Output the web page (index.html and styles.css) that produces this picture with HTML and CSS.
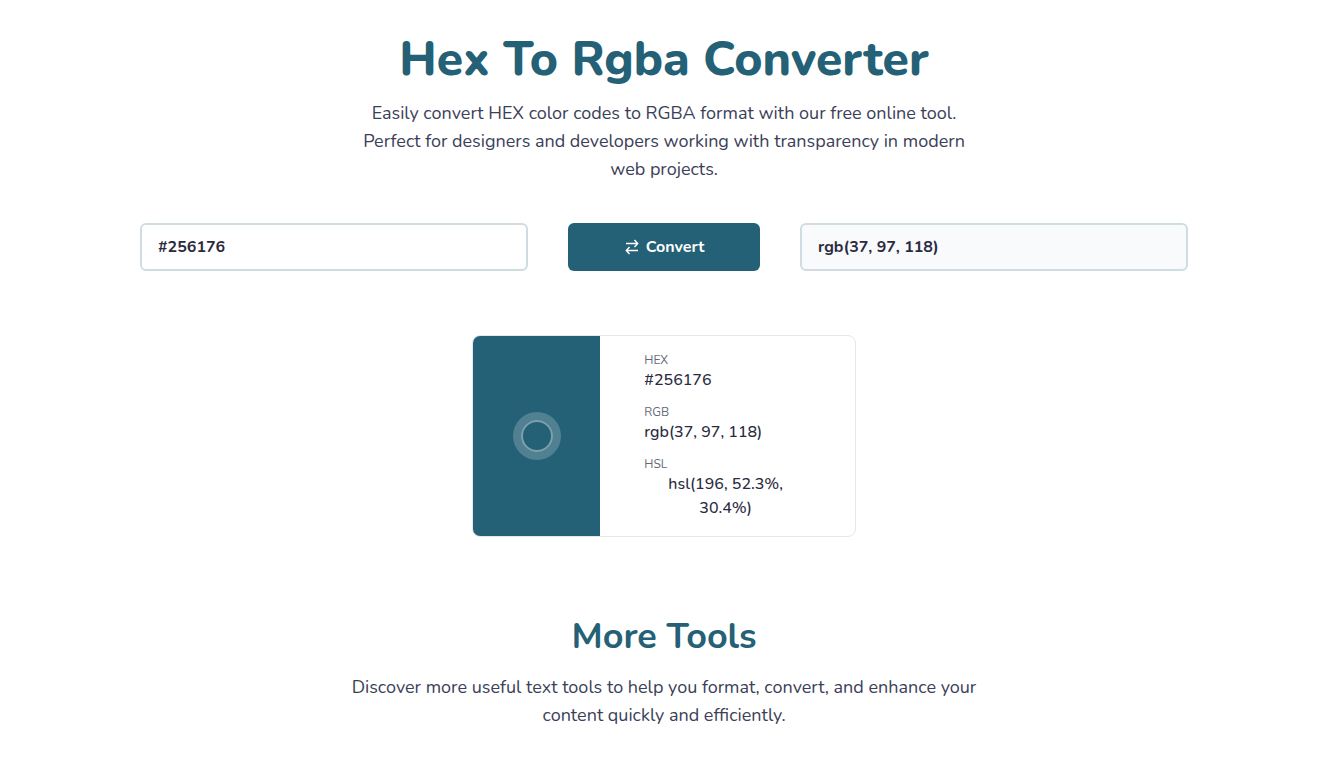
FILE: index.html
```html
<!DOCTYPE html>
<html lang="en">
<head>
    <meta charset="UTF-8">
    <meta name="viewport" content="width=device-width, initial-scale=1.0">
    <title>Hex To Rgba Converter</title>
    <link rel="stylesheet" href="styles.css">
</head>
<body>

<main class="container">
    <header class="intro">
        <h1>Hex To Rgba Converter</h1>
        <p class="lead">Easily convert HEX color codes to RGBA format with our free online tool. Perfect for designers and developers working with transparency in modern web projects.</p>
    </header>

    <form id="convertForm" class="converter">
        <input type="text" id="hexInput" class="field" value="#256176" aria-label="HEX color">
        <button type="submit" class="convert-btn">
            <svg class="icon" viewBox="0 0 16 16" aria-hidden="true">
                <path d="M2 4.5h11.5M10.5 1l3.2 3.5-3.2 3.5M14 11.5H2.5M5.5 8l-3.2 3.5 3.2 3.5"/>
            </svg>
            Convert
        </button>
        <input type="text" id="rgbOutput" class="field output" value="rgb(37, 97, 118)" aria-label="RGBA color" readonly>
    </form>

    <section class="card">
        <div class="swatch"><span class="dot"></span></div>
        <dl class="values">
            <dt>HEX</dt>
            <dd>#256176</dd>
            <dt>RGB</dt>
            <dd>rgb(37, 97, 118)</dd>
            <dt>HSL</dt>
            <dd>hsl(196, 52.3%, 30.4%)</dd>
        </dl>
    </section>

    <section class="more">
        <h2>More Tools</h2>
        <p class="lead">Discover more useful text tools to help you format, convert, and enhance your content quickly and efficiently.</p>
    </section>
</main>

<script>
    const convertForm = document.getElementById('convertForm');
    convertForm.addEventListener('submit', (e) => {
        e.preventDefault();

        const hex = document.getElementById('hexInput').value.replace('#', '');
        const num = parseInt(hex, 16);

        // Only plain 6 digit codes are supported
        if (hex.length !== 6 || isNaN(num)) {
            return;
        }

        document.getElementById('rgbOutput').value = `rgb(${num >> 16}, ${(num >> 8) & 255}, ${num & 255})`;
    });
</script>

</body>
</html>
```
FILE: styles.css
```css
* {
    box-sizing: border-box;
}
body {
    margin: 0;
    font-family: Nunito, "Open Sans", "Noto Sans", sans-serif;
    font-size: 16px;
    line-height: 24px;
    color: #2b2b40;
    background-color: #fff;
}
.container {
    padding: 35px 147px 0 140px;
}
h1, h2, p {
    margin: 0;
}
.intro, .more {
    text-align: center;
}
h1, h2 {
    color: #256176;
    font-weight: 700;
}
h1 {
    font-size: 48px;
    font-weight: 800;
    line-height: 48px;
}
h2 {
    font-size: 36px;
    line-height: 40px;
}
.lead {
    max-width: 640px;
    margin: 16px auto 0;
    font-size: 18px;
    line-height: 28px;
    color: #3b4058;
}
.converter {
    display: grid;
    grid-template-columns: 1fr 192px 1fr;
    gap: 40px;
    margin-top: 40px;
}
.field {
    width: 100%;
    height: 48px;
    padding: 0 16px;
    border: 2px solid #cfdce2;
    border-radius: 6px;
    font: inherit;
    font-weight: 700;
    color: #2b2b40;
}
.output {
    background-color: #f8fafc;
}
.convert-btn {
    display: flex;
    justify-content: center;
    align-items: center;
    gap: 6px;
    border: none;
    border-radius: 6px;
    font: inherit;
    font-weight: 700;
    color: #fff;
    background-color: #256176;
    cursor: pointer;
}
.icon {
    width: 16px;
    height: 16px;
    fill: none;
    stroke: currentColor;
    stroke-width: 1.4;
}
.card {
    display: grid;
    grid-template-columns: 1fr 2fr;
    max-width: 384px;
    margin: 64px auto 0;
    border: 1px solid #e5e7eb;
    border-radius: 8px;
    overflow: hidden;
}
.swatch {
    display: flex;
    justify-content: center;
    align-items: center;
    background-color: #256176;
}
.dot {
    width: 32px;
    height: 32px;
    border: 2px solid rgba(255, 255, 255, 0.4);
    border-radius: 50%;
    box-shadow: 0 0 0 8px rgba(255, 255, 255, 0.2);
}
.values {
    display: flex;
    flex-direction: column;
    align-items: flex-start;
    margin: 0;
    padding: 16px 48px 16px 44px;
}
.values dt {
    font-size: 12px;
    line-height: 16px;
    color: #646976;
}
.values dd {
    margin: 0 0 12px;
    font-weight: 500;
    text-align: center;
}
.values dd:last-child {
    margin-bottom: 0;
}
.more {
    margin-top: 80px;
}
```
